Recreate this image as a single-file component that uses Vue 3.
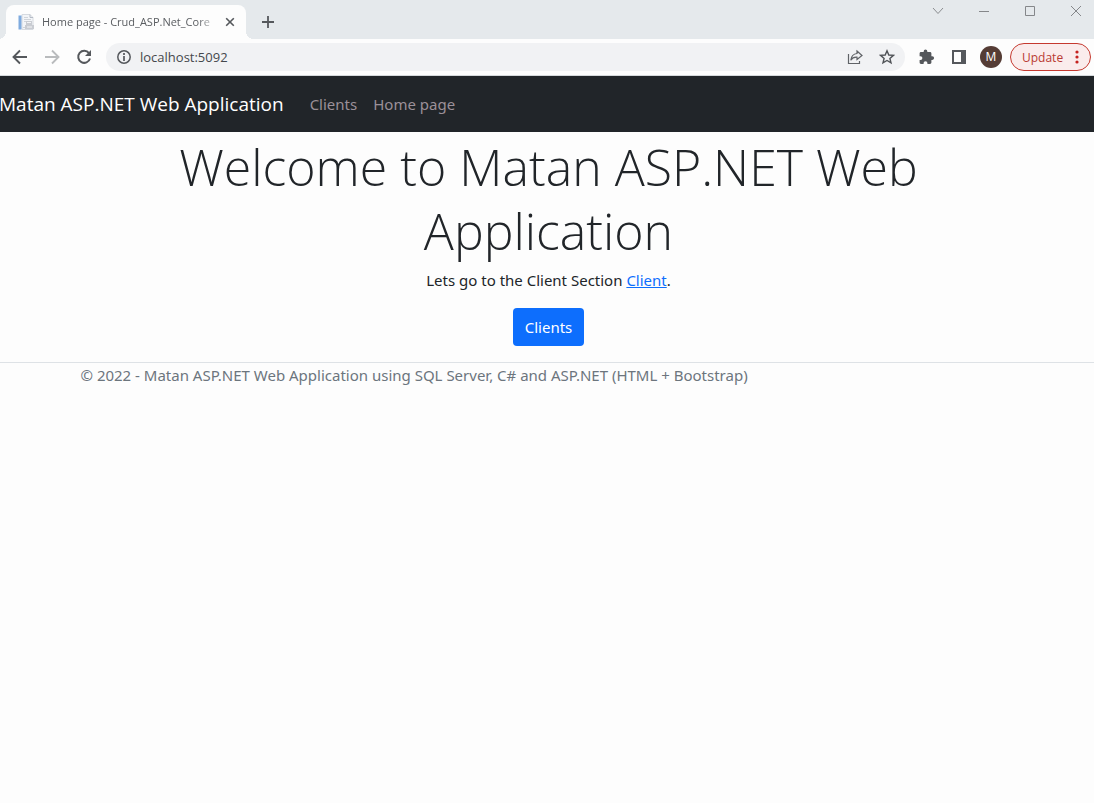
<script setup>
import { ref } from 'vue'

const address = ref('localhost:5092')
const navLinks = ['Clients', 'Home page']
</script>

<template>
  <div class="window">
    <header class="browser">
      <div class="tabstrip">
        <div class="tab">
          <svg class="favicon" width="16" height="16" viewBox="0 0 16 16" aria-hidden="true">
            <path d="M4 .5h8l3 3v12H4z" fill="#f3f5f8" stroke="#d6dae0" />
            <path d="M12 .5v3h3" fill="none" stroke="#b5bbc6" />
            <path d="M.5 1.500h3v14h-3z" fill="#7fabdf" />
            <path d="M6 3.500h4M6 5.500h7M6 7.500h2M5 13.500h2" stroke="#d0d4da" />
            <path d="M8 7h6v4H8zM7 11h9v4H7z" fill="#c9ccd2" />
            <path d="M9 8.500h4M9 13h5" stroke="#f3f4f6" />
          </svg>
          <span class="tab-title">Home page - Crud_ASP.Net_Core</span>
          <button class="tab-close" type="button" aria-label="Close tab">
            <svg width="10" height="10" viewBox="0 0 10 10"><path d="M1.2 1.2l7.6 7.6M8.8 1.2L1.2 8.8" stroke="#55585c" stroke-width="1.600" /></svg>
          </button>
        </div>
        <button class="new-tab" type="button" aria-label="New tab">
          <svg width="12" height="12" viewBox="0 0 12 12"><path d="M6 0v12M0 6h12" stroke="#55585c" stroke-width="1.800" /></svg>
        </button>
        <div class="window-controls">
          <button type="button" aria-label="Search tabs">
            <svg width="12" height="12" viewBox="0 0 12 12"><path d="M1 3l5 5.5L11 3" fill="none" stroke="#8b8d90" /></svg>
          </button>
          <button type="button" aria-label="Minimize">
            <svg width="12" height="12" viewBox="0 0 12 12"><path d="M1 6.5h10" stroke="#85878a" /></svg>
          </button>
          <button type="button" aria-label="Maximize">
            <svg width="12" height="12" viewBox="0 0 12 12"><path d="M1.500 1.500h9v9h-9z" fill="none" stroke="#85878a" /></svg>
          </button>
          <button type="button" aria-label="Close">
            <svg width="12" height="12" viewBox="0 0 12 12"><path d="M1 1l10 10M11 1L1 11" stroke="#85878a" /></svg>
          </button>
        </div>
      </div>

      <div class="toolbar">
        <button class="tool" type="button" aria-label="Back">
          <svg width="16" height="16" viewBox="0 0 16 16"><path d="M15 8H2.500M8 1.500L1.500 8 8 14.500" fill="none" stroke="#55585c" stroke-width="1.900" /></svg>
        </button>
        <button class="tool" type="button" aria-label="Forward">
          <svg width="16" height="16" viewBox="0 0 16 16"><path d="M1 8h12.500M8 1.500L14.500 8 8 14.500" fill="none" stroke="#b9bbbd" stroke-width="1.900" /></svg>
        </button>
        <button class="tool" type="button" aria-label="Reload">
          <svg width="16" height="16" viewBox="0 0 16 16"><path d="M13 4.200A6 6 0 1 0 14 9.500" fill="none" stroke="#55585c" stroke-width="2" /><path d="M15 1v6H9z" fill="#55585c" /></svg>
        </button>

        <div class="address-bar">
          <svg width="14" height="14" viewBox="0 0 14 14" aria-hidden="true"><circle cx="7" cy="7" r="6.200" fill="none" stroke="#55585c" stroke-width="1.500" /><path d="M7 6v5M7 3v2" stroke="#55585c" stroke-width="1.700" /></svg>
          <input v-model="address" type="text" aria-label="Address" />
          <button class="tool" type="button" aria-label="Share">
            <svg width="16" height="16" viewBox="0 0 16 16"><path d="M1.500 5v9.500h11V12M10 2l5 4.500-5 4V8.200C7 8 5 9 3.800 11.200 4.200 7.500 6 5 10 4.500z" fill="none" stroke="#606367" stroke-width="1.200" /></svg>
          </button>
          <button class="tool" type="button" aria-label="Bookmark">
            <svg width="16" height="16" viewBox="0 0 16 16"><path d="M8 1.800l1.800 4.200 4.600.4-3.500 3 1.100 4.500-4-2.400-4 2.400 1.100-4.500-3.500-3 4.600-.4z" fill="none" stroke="#505357" stroke-width="1.400" /></svg>
          </button>
        </div>

        <button class="tool" type="button" aria-label="Extensions">
          <svg width="16" height="16" viewBox="0 0 16 16"><path d="M13.300 7.300h-.9V4.500c0-.8-.6-1.400-1.400-1.400H8.300v-.8a1.800 1.800 0 0 0-3.600 0v.8H2C1.200 3.100.6 3.700.6 4.500v2.700h.9a1.900 1.900 0 0 1 0 3.800H.6v2.600c0 .8.6 1.400 1.400 1.400h2.600v-.9a1.900 1.900 0 0 1 3.800 0v.9H11c.8 0 1.400-.6 1.400-1.400v-2.700h.9a1.800 1.800 0 0 0 0-3.600z" fill="#55585c" /></svg>
        </button>
        <button class="tool" type="button" aria-label="Side panel">
          <svg width="16" height="16" viewBox="0 0 16 16"><path d="M2 2h12v12H2z" fill="none" stroke="#55585c" stroke-width="2" /><path d="M10 1h5v14h-5z" fill="#55585c" /></svg>
        </button>
        <button class="avatar" type="button" aria-label="Profile">M</button>
        <button class="update" type="button">
          <span>Update</span>
          <svg width="4" height="14" viewBox="0 0 4 14" aria-hidden="true"><g fill="#c5221f"><circle cx="2" cy="2" r="1.600" /><circle cx="2" cy="7" r="1.600" /><circle cx="2" cy="12" r="1.600" /></g></svg>
        </button>
      </div>
    </header>

    <nav class="navbar">
      <a class="brand" href="#">Matan ASP.NET Web Application</a>
      <a v-for="link in navLinks" :key="link" class="nav-link" href="#">{{ link }}</a>
    </nav>

    <div class="page">
      <main class="container welcome">
        <h1>Welcome to Matan ASP.NET Web Application</h1>
        <p>Lets go to the Client Section <a href="#">Client</a>.</p>
        <a class="btn" href="#">Clients</a>
      </main>

      <footer class="footer">
        <div class="container">© 2022 - Matan ASP.NET Web Application using SQL Server, C# and ASP.NET (HTML + Bootstrap)</div>
      </footer>
    </div>
  </div>
</template>

<style>
body {
  margin: 0;
  background: #fdfdfd;
}
</style>

<style scoped>
.window {
  font-family: "Noto Sans", "Open Sans", sans-serif;
  font-size: 15px;
  line-height: 24px;
  color: #212529;
}
.window * {
  box-sizing: border-box;
}
button {
  padding: 0;
  border: 0;
  background: none;
  font-family: inherit;
}
svg {
  display: block;
  flex: none;
}
.browser {
  background: #fdfdfd;
  border-bottom: 1px solid #d5d9dc;
  font-family: "Open Sans", "Noto Sans", sans-serif;
}
.tabstrip {
  display: flex;
  height: 39px;
  padding-left: 6px;
  background: #e5e9ec;
}
.tab {
  position: relative;
  display: flex;
  align-items: center;
  width: 240px;
  margin-top: 5px;
  padding: 0 11px 0 12px;
  border-radius: 8px 8px 0 0;
  background: #fdfdfd;
}
.tab::before,
.tab::after {
  content: "";
  position: absolute;
  bottom: 0;
  width: 8px;
  height: 8px;
}
.tab::before {
  left: -8px;
  background: radial-gradient(circle at 0 0, #e5e9ec 8px, #fdfdfd 8px);
}
.tab::after {
  right: -8px;
  background: radial-gradient(circle at 100% 0, #e5e9ec 8px, #fdfdfd 8px);
}
.tab-title {
  flex: 1;
  margin: 0 6px 0 8px;
  overflow: hidden;
  white-space: nowrap;
  font-size: 11px;
  color: #5a5d61;
  mask-image: linear-gradient(to right, #000 88%, transparent);
}
.new-tab {
  display: grid;
  place-items: center;
  width: 28px;
  height: 28px;
  margin: 8px 0 0 8px;
}
.window-controls {
  display: flex;
  margin-left: auto;
}
.window-controls button {
  display: grid;
  place-items: center;
  width: 46px;
  height: 22px;
}
.window-controls button:last-child {
  width: 36px;
}
.window-controls button:nth-child(3) {
  margin-right: 5px;
}
.toolbar {
  display: flex;
  align-items: center;
  height: 36px;
  padding: 0 3px 0 12px;
  gap: 16px;
}
.address-bar {
  display: flex;
  flex: 1;
  align-items: center;
  height: 28px;
  margin: 0 -2px;
  padding: 0 10px 0 11px;
  border-radius: 14px;
  background: #f1f2f4;
}
.address-bar input {
  flex: 1;
  min-width: 0;
  margin-left: 9px;
  padding: 0;
  border: 0;
  outline: 0;
  background: none;
  font-family: inherit;
  font-size: 13px;
  color: #45484c;
}
.address-bar .tool + .tool {
  margin-left: 16px;
}
.avatar {
  width: 22px;
  height: 22px;
  margin: 0 -8px 0 -3px;
  border-radius: 50%;
  background: #553c35;
  color: #fff;
  font-size: 12px;
  line-height: 22px;
}
.update {
  display: flex;
  align-items: center;
  justify-content: space-between;
  width: 81px;
  height: 28px;
  padding: 0 11px;
  border: 1px solid #c5392f;
  border-radius: 14px;
  background: #faecec;
  color: #b93a32;
  font-size: 12px;
}
.navbar {
  display: flex;
  align-items: center;
  height: 56px;
  background: #212529;
}
.brand {
  margin: 0 18px 0 -1px;
  color: #fff;
  font-family: "Open Sans", "Noto Sans", sans-serif;
  font-size: 19px;
  text-decoration: none;
}
.nav-link {
  padding: 0 8px;
  color: #9b9098;
  text-decoration: none;
}
.page {
  padding-left: 3px;
}
.container {
  width: 100%;
  max-width: 960px;
  margin: 0 auto;
  padding: 0 12px;
}
.welcome {
  padding-top: 3px;
  padding-bottom: 16px;
  text-align: center;
}
h1 {
  margin: 0 0 5px;
  font-family: "Open Sans", "Noto Sans", sans-serif;
  font-size: 50px;
  font-weight: 300;
  line-height: 64px;
}
p {
  margin: 0 0 16px;
}
p a {
  color: #0d6efd;
}
.btn {
  display: inline-block;
  padding: 7px 12px;
  border-radius: 4px;
  background: #0d6efd;
  color: #fff;
  text-decoration: none;
  vertical-align: top;
}
.footer {
  margin-left: -3px;
  padding-left: 3px;
  border-top: 1px solid #dee2e6;
  color: #6c757d;
}
</style>
